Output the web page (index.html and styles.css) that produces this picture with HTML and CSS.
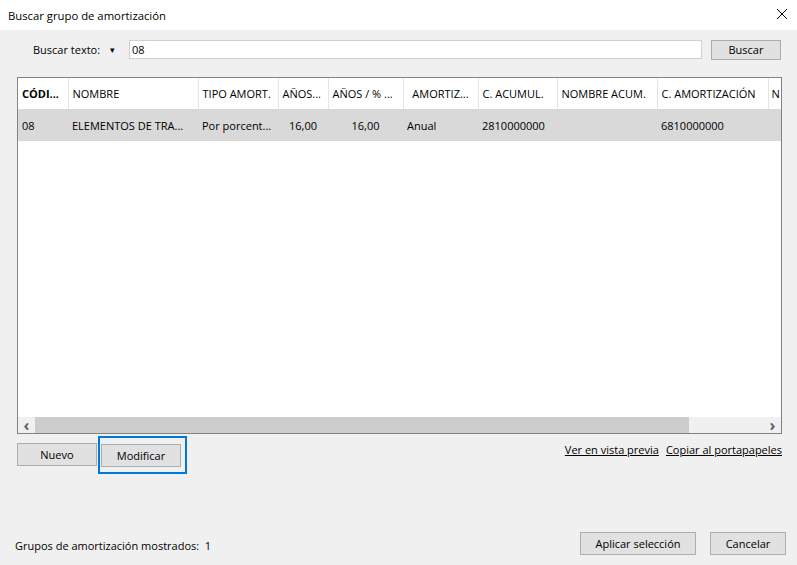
FILE: index.html
```html
<!DOCTYPE html>
<html lang="es">
<head>
    <meta charset="utf-8">
    <title>Buscar grupo de amortización</title>
    <link rel="stylesheet" href="styles.css">
</head>
<body>

<div class="window">
    <div class="titlebar">
        <span class="title">Buscar grupo de amortización</span>
        <svg class="close" width="12" height="12" viewBox="0 0 12 12">
            <path d="M1 1L11 11M11 1L1 11" stroke="#000" stroke-width="1" fill="none"/>
        </svg>
    </div>

    <div class="content">
        <div class="search">
            <span class="search-label">Buscar texto:</span>
            <span class="dropdown">&#9662;</span>
            <div class="search-input">08</div>
            <button class="btn btn-search">Buscar</button>
        </div>

        <div class="grid">
            <div class="grid-body">
                <table>
                    <colgroup>
                        <col style="width:50px">
                        <col style="width:130px">
                        <col style="width:80px">
                        <col style="width:50px">
                        <col style="width:75px">
                        <col style="width:75px">
                        <col style="width:79px">
                        <col style="width:100px">
                        <col style="width:111px">
                        <col style="width:13px">
                    </colgroup>
                    <thead>
                        <tr>
                            <th class="bold">CÓDI...</th>
                            <th>NOMBRE</th>
                            <th>TIPO AMORT.</th>
                            <th>AÑOS...</th>
                            <th>AÑOS / % ...</th>
                            <th class="center">AMORTIZ...</th>
                            <th>C. ACUMUL.</th>
                            <th>NOMBRE ACUM.</th>
                            <th>C. AMORTIZACIÓN</th>
                            <th class="last">N</th>
                        </tr>
                    </thead>
                    <tbody>
                        <tr class="selected">
                            <td>08</td>
                            <td>ELEMENTOS DE TRA...</td>
                            <td>Por porcent...</td>
                            <td class="center">16,00</td>
                            <td class="center">16,00</td>
                            <td>Anual</td>
                            <td>2810000000</td>
                            <td></td>
                            <td>6810000000</td>
                            <td></td>
                        </tr>
                    </tbody>
                </table>
            </div>
            <div class="hscroll">
                <span class="arrow">&#8249;</span>
                <div class="track"><div class="thumb"></div></div>
                <span class="arrow">&#8250;</span>
            </div>
        </div>

        <div class="actions">
            <button class="btn btn-small">Nuevo</button>
            <div class="focus-ring"><button class="btn btn-small">Modificar</button></div>
            <div class="links">
                <a href="#">Ver en vista previa</a>
                <a href="#">Copiar al portapapeles</a>
            </div>
        </div>

        <div class="footer">
            <span class="count">Grupos de amortización mostrados:&nbsp; 1</span>
            <button class="btn btn-apply">Aplicar selección</button>
            <button class="btn btn-cancel">Cancelar</button>
        </div>
    </div>
</div>

</body>
</html>
```

FILE: styles.css
```css
body {
    margin: 0;
    font-family: "Open Sans", "Noto Sans", sans-serif;
    font-size: 11px;
    color: #000;
    background: #f0f0f0;
}
.window {
    width: 797px;
    height: 565px;
    display: flex;
    flex-direction: column;
    overflow: hidden;
}
.titlebar {
    height: 30px;
    background: #fff;
    display: flex;
    align-items: center;
    padding: 0 9px 0 8px;
    flex-shrink: 0;
}
.title {
    flex: 1;
    font-size: 11.3px;
}
.close {
    margin-top: -2px;
}
.content {
    flex: 1;
    display: flex;
    flex-direction: column;
    padding: 10px 15px 10px 17px;
}
.search {
    display: flex;
    align-items: center;
    height: 19px;
    padding-left: 16px;
}
.search-label {
    width: 77px;
}
.dropdown {
    font-size: 9px;
    width: 19px;
}
.search-input {
    width: 569px;
    height: 17px;
    line-height: 17px;
    background: #fff;
    border: 1px solid #d0d0d0;
    padding-left: 2px;
}
.btn {
    font-family: inherit;
    font-size: 11px;
    background: #e1e1e1;
    border: 1px solid #adadad;
    color: #000;
    padding: 0;
}
.btn-search {
    margin-left: 9px;
    width: 70px;
    height: 20px;
}
.grid {
    margin-top: 18px;
    height: 355px;
    border: 1px solid #828282;
    background: #fff;
    display: flex;
    flex-direction: column;
}
.grid-body {
    flex: 1;
    overflow: hidden;
}
table {
    border-collapse: collapse;
    table-layout: fixed;
    width: 763px;
}
th {
    height: 31px;
    font-weight: normal;
    text-align: left;
    padding: 0 4px;
    border-right: 1px solid #e5e5e5;
    white-space: nowrap;
    overflow: hidden;
}
th.bold {
    font-weight: bold;
}
th.last {
    padding: 0 0 0 3px;
    border-right: none;
}
td {
    height: 32px;
    padding: 0 4px;
    white-space: nowrap;
    overflow: hidden;
}
.center {
    text-align: center;
}
tr.selected {
    background: #d9d9d9;
}
.hscroll {
    height: 16px;
    display: flex;
    align-items: center;
    background: #f0f0f0;
}
.arrow {
    width: 17px;
    text-align: center;
    font-size: 16px;
    font-weight: bold;
    color: #606060;
    line-height: 14px;
}
.track {
    flex: 1;
    height: 16px;
}
.thumb {
    width: 654px;
    height: 16px;
    background: #cdcdcd;
}
.actions {
    margin-top: 2px;
    display: flex;
    align-items: center;
    height: 37px;
}
.btn-small {
    width: 80px;
    height: 23px;
}
.focus-ring {
    margin-left: 1px;
    border: 2px solid #0078d7;
    padding: 6px 4px 5px 1px;
}
.links {
    margin-left: auto;
    display: flex;
    gap: 7px;
    padding-bottom: 11px;
}
.links a {
    color: #000;
    text-decoration: underline;
}
.footer {
    margin-top: auto;
    display: flex;
    align-items: center;
    height: 23px;
}
.count {
    flex: 1;
    margin-left: -2px;
    padding-top: 3px;
}
.btn-apply {
    width: 116px;
    height: 23px;
}
.btn-cancel {
    width: 76px;
    height: 23px;
    margin-left: 14px;
    margin-right: -4px;
}
```
